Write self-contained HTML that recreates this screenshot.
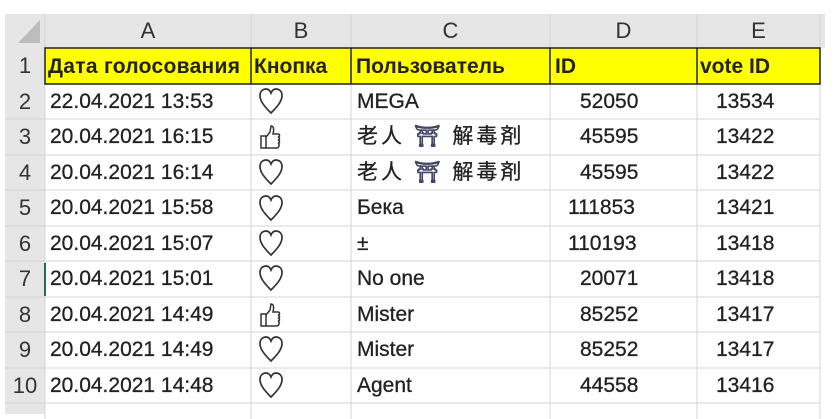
<!DOCTYPE html>
<html><head><meta charset="utf-8"><style>
body{margin:0;width:834px;height:419px;background:#fff;overflow:hidden;font-family:"Liberation Sans","Noto Sans CJK SC",sans-serif;color:#222}
.g{position:absolute;left:0;top:0}
.c{position:absolute;font-size:21px;white-space:nowrap;line-height:35px;-webkit-text-stroke:0.3px #222}
.h{position:absolute;font-size:22px;text-align:center;line-height:34px;color:#333}
.b{font-weight:bold;font-size:21px;-webkit-text-stroke:0}
</style></head><body>
<div class="g" style="left:5px;top:14px;width:820px;height:34px;background:#e6e6e6"></div>
<div class="g" style="left:5px;top:14px;width:40px;height:400px;background:#e6e6e6"></div>
<svg class="g" width="834" height="419">
<polygon points="40,20 40,43 18,43" fill="#bdbdbd"/>
<rect x="45" y="48" width="775" height="36" fill="#ffff00"/>
<g stroke="#d4d4d4" stroke-width="1">
<line x1="45" y1="14" x2="45" y2="419"/>
<line x1="251" y1="14" x2="251" y2="48"/><line x1="351" y1="14" x2="351" y2="48"/>
<line x1="550" y1="14" x2="550" y2="48"/><line x1="697" y1="14" x2="697" y2="48"/>
<line x1="820" y1="14" x2="820" y2="48"/>
<line x1="251" y1="84" x2="251" y2="419"/><line x1="351" y1="84" x2="351" y2="419"/>
<line x1="550" y1="84" x2="550" y2="419"/><line x1="697" y1="84" x2="697" y2="419"/>
<line x1="820" y1="84" x2="820" y2="419"/>
<line x1="5" y1="119" x2="820" y2="119"/><line x1="5" y1="155" x2="820" y2="155"/>
<line x1="5" y1="190" x2="820" y2="190"/><line x1="5" y1="226" x2="820" y2="226"/>
<line x1="5" y1="261" x2="820" y2="261"/><line x1="5" y1="297" x2="820" y2="297"/>
<line x1="5" y1="332" x2="820" y2="332"/><line x1="5" y1="368" x2="820" y2="368"/>
<line x1="5" y1="403" x2="820" y2="403"/>
</g>
<g stroke="#222" stroke-width="1.5" fill="none">
<rect x="45" y="48" width="775" height="36"/>
<line x1="251" y1="48" x2="251" y2="84"/><line x1="351" y1="48" x2="351" y2="84"/>
<line x1="550" y1="48" x2="550" y2="84"/><line x1="697" y1="48" x2="697" y2="84"/>
</g>
<line x1="45" y1="263" x2="45" y2="296" stroke="#217346" stroke-width="2"/>
<defs>
<path id="ht" d="M11,24 C4,17 0,12 0,6.5 C0,2 3,0 6,0 C8.5,0 10,1.5 11,4 C12,1.5 13.5,0 16,0 C19,0 22,2 22,6.5 C22,12 18,17 11,24 Z" fill="none" stroke="#333" stroke-width="1.7"/>
<g id="th" fill="none" stroke="#333" stroke-width="1.5"><rect x="0" y="10" width="5" height="12"/><path d="M5,11 L9,6 L10,0 C13,0 13,4 12,8 L17,8 C19,8 19,11 17,11 C19,12 19,14 17,14 C19,15 19,17 17,17 C19,18 18,22 16,22 L5,22"/></g>
</defs>
<use href="#ht" x="260" y="89"/><use href="#th" x="261" y="126"/>
<use href="#ht" x="260" y="160"/><use href="#ht" x="260" y="196"/>
<use href="#ht" x="260" y="231"/><use href="#ht" x="260" y="266"/>
<use href="#th" x="261" y="304"/><use href="#ht" x="260" y="337"/>
<use href="#ht" x="260" y="373"/>
</svg>
<div class="h" style="left:45px;top:14px;width:206px">A</div>
<div class="h" style="left:251px;top:14px;width:100px">B</div>
<div class="h" style="left:351px;top:14px;width:199px">C</div>
<div class="h" style="left:550px;top:14px;width:147px">D</div>
<div class="h" style="left:697px;top:14px;width:123px">E</div>
<div class="h" style="left:5px;top:49px;width:40px">1</div>
<div class="h" style="left:5px;top:85px;width:40px">2</div>
<div class="h" style="left:5px;top:120px;width:40px">3</div>
<div class="h" style="left:5px;top:156px;width:40px">4</div>
<div class="h" style="left:5px;top:191px;width:40px">5</div>
<div class="h" style="left:5px;top:227px;width:40px">6</div>
<div class="h" style="left:5px;top:262px;width:40px">7</div>
<div class="h" style="left:5px;top:298px;width:40px">8</div>
<div class="h" style="left:5px;top:333px;width:40px">9</div>
<div class="h" style="left:5px;top:369px;width:40px">10</div>
<div class="c b" style="left:48px;top:49px;letter-spacing:0.3px">Дата голосования</div>
<div class="c b" style="left:254px;top:49px">Кнопка</div>
<div class="c b" style="left:356px;top:49px">Пользователь</div>
<div class="c b" style="left:555px;top:49px">ID</div>
<div class="c b" style="left:700px;top:49px">vote ID</div>
<div style="position:absolute;left:50px;top:84px">
<div class="c" style="top:0">22.04.2021 13:53</div>
<div class="c" style="top:35px">20.04.2021 16:15</div>
<div class="c" style="top:71px">20.04.2021 16:14</div>
<div class="c" style="top:106px">20.04.2021 15:58</div>
<div class="c" style="top:142px">20.04.2021 15:07</div>
<div class="c" style="top:177px">20.04.2021 15:01</div>
<div class="c" style="top:213px">20.04.2021 14:49</div>
<div class="c" style="top:248px">20.04.2021 14:49</div>
<div class="c" style="top:284px">20.04.2021 14:48</div>
</div>
<div style="position:absolute;left:357px;top:84px">
<div class="c" style="top:0">MEGA</div>
<div class="c" style="top:35px;letter-spacing:3px">老人 <span style="color:#446;-webkit-text-stroke:0.8px #446">⛩</span> 解毒剤</div>
<div class="c" style="top:71px;letter-spacing:3px">老人 <span style="color:#446;-webkit-text-stroke:0.8px #446">⛩</span> 解毒剤</div>
<div class="c" style="top:106px">Бека</div>
<div class="c" style="top:142px">±</div>
<div class="c" style="top:177px">No one</div>
<div class="c" style="top:213px">Mister</div>
<div class="c" style="top:248px">Mister</div>
<div class="c" style="top:284px">Agent</div>
</div>
<div style="position:absolute;left:568px;top:84px">
<div class="c" style="top:0;left:12px">52050</div>
<div class="c" style="top:35px;left:12px">45595</div>
<div class="c" style="top:71px;left:12px">45595</div>
<div class="c" style="top:106px;left:0">111853</div>
<div class="c" style="top:142px;left:0">110193</div>
<div class="c" style="top:177px;left:12px">20071</div>
<div class="c" style="top:213px;left:12px">85252</div>
<div class="c" style="top:248px;left:12px">85252</div>
<div class="c" style="top:284px;left:12px">44558</div>
</div>
<div style="position:absolute;left:716px;top:84px">
<div class="c" style="top:0">13534</div>
<div class="c" style="top:35px">13422</div>
<div class="c" style="top:71px">13422</div>
<div class="c" style="top:106px">13421</div>
<div class="c" style="top:142px">13418</div>
<div class="c" style="top:177px">13418</div>
<div class="c" style="top:213px">13417</div>
<div class="c" style="top:248px">13417</div>
<div class="c" style="top:284px">13416</div>
</div>
</body></html>
